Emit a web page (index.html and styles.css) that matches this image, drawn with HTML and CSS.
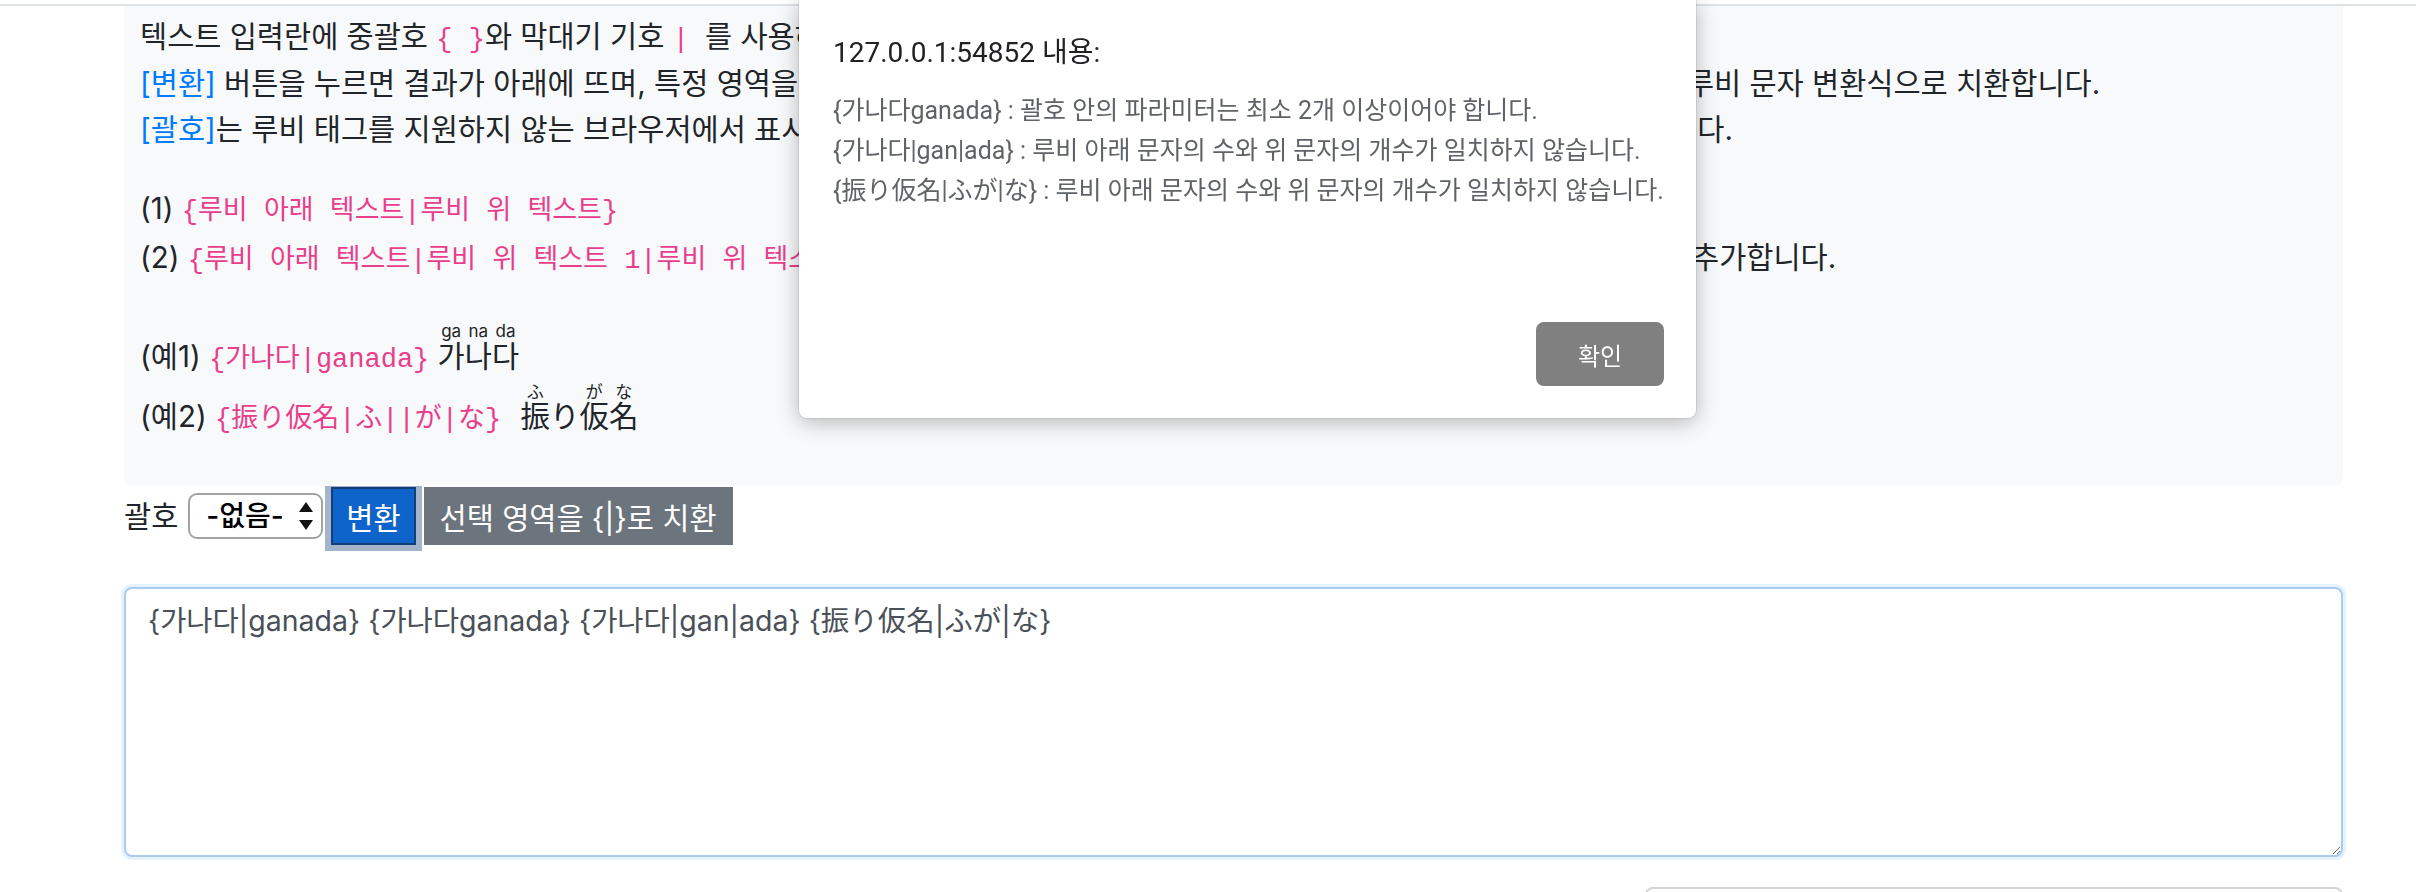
FILE: index.html
```html
<!DOCTYPE html>
<html lang="ko">
<head>
<meta charset="utf-8">
<title>루비 문자 변환기</title>
<link rel="stylesheet" href="styles.css">
</head>
<body>
<div class="topbar"></div>
<main class="page">
  <section class="help">
    <p class="desc">텍스트 입력란에 중괄호 <code>{ }</code>와 막대기 기호 <code> | </code>를 사용하여 루비 문자를 입력합니다.<br>
    <span class="kw">[변환]</span> 버튼을 누르면 결과가 아래에 뜨며, 특정 영역을 드래그해 선택한 후 <span class="kw">[선택 영역을 {|}로 치환]</span> 버튼을 누르면 해당 영역을 루비 문자 변환식으로 치환합니다.<br>
    <span class="kw">[괄호]</span>는 루비 태그를 지원하지 않는 브라우저에서 표시되는 괄호를 선택하는 옵션으로 선택하지 않으면 괄호 없이 그냥 표시됩니다.</p>
    <p class="syntax">(1) <code>{루비 아래 텍스트|루비 위 텍스트}</code><br>
    (2) <code>{루비 아래 텍스트|루비 위 텍스트 1|루비 위 텍스트 2}</code> : 루비 위 텍스트들을 글자마다 따로 달고 싶은 경우에는 막대기를 추가합니다.</p>
    <p class="examples">(예1) <code>{가나다|ganada}</code> <ruby>가<rt>ga</rt>나<rt>na</rt>다<rt>da</rt></ruby><br>
    (예2) <code>{振り仮名|ふ||が|な}</code> <ruby class="gap" lang="ja">振<rt>ふ</rt>り<rt></rt>仮<rt>が</rt>名<rt>な</rt></ruby></p>
  </section>
  <div class="controls">
    <label class="bracket-label" for="bracket">괄호</label>
    <span class="select-wrap">
      <select id="bracket" class="bracket-select">
        <option>-없음-</option>
        <option>( )</option>
        <option>[ ]</option>
      </select>
      <svg class="select-arrows" viewBox="0 0 16 28" width="16" height="28" aria-hidden="true">
        <path d="M8 0 L15 10 L1 10 Z" fill="#111"/>
        <path d="M1 18 L15 18 L8 28 Z" fill="#111"/>
      </svg>
    </span>
    <button class="btn btn-primary">변환</button>
    <button class="btn btn-secondary">선택 영역을 {|}로 치환</button>
  </div>
  <textarea class="source">{가나다|ganada} {가나다ganada} {가나다|gan|ada} {振り仮名|ふが|な}</textarea>
  <div class="result-row"><div class="result"></div></div>
</main>
<div class="alert-dialog" role="alertdialog">
  <div class="alert-title">127.0.0.1:54852 내용:</div>
  <div class="alert-msg">
    <p>{가나다ganada} : 괄호 안의 파라미터는 최소 2개 이상이어야 합니다.</p>
    <p>{가나다|gan|ada} : 루비 아래 문자의 수와 위 문자의 개수가 일치하지 않습니다.</p>
    <p>{振り仮名|ふが|な} : 루비 아래 문자의 수와 위 문자의 개수가 일치하지 않습니다.</p>
  </div>
  <div class="alert-actions"><button class="alert-ok">확인</button></div>
</div>
</body>
</html>
```

FILE: styles.css
```css
html, body {
  margin: 0;
  height: 892px;
  overflow: hidden;
  background: #fff;
}
body {
  font-family: Inter, "Noto Sans CJK KR", sans-serif;
  font-size: 29.5px;
  color: #212529;
}
.topbar {
  height: 4px;
  border-bottom: 2px solid #dee2e6;
}
.page {
  margin: 0 73px 0 124px;
}
.help {
  position: relative;
  z-index: 1;
  background: #f8f9fa;
  border-radius: 0 0 8px 8px;
  padding: 7px 16px 40px;
}
.help p {
  margin: 0;
  white-space: nowrap;
}
.desc {
  line-height: 46.5px;
}
.syntax {
  line-height: 49px;
  margin-top: 31px !important;
}
.examples {
  line-height: 60px;
  margin-top: 41px !important;
}
code {
  font-family: "Liberation Mono", "Noto Sans CJK KR", monospace;
  font-size: 27px;
  line-height: 1;
  color: #e83e8c;
}
.kw {
  color: #007bff;
}
ruby {
  line-height: 1.3;
}
rt {
  font-size: 17px;
  line-height: 1;
}
.gap {
  margin-left: 11px;
}
.controls {
  display: flex;
  align-items: center;
  gap: 8px;
  height: 58px;
  margin-top: 1px;
}
.bracket-label {
  margin-right: 2px;
  padding-bottom: 3px;
}
.select-wrap {
  position: relative;
  display: inline-block;
}
.bracket-select {
  appearance: none;
  -webkit-appearance: none;
  width: 135px;
  height: 46px;
  box-sizing: border-box;
  border: 2px solid #a3a3a3;
  border-radius: 9px;
  background: #fff;
  padding: 0 0 0 16px;
  font-family: Inter, "Noto Sans CJK KR", sans-serif;
  font-size: 28px;
  font-weight: 500;
  color: #000;
}
.select-arrows {
  position: absolute;
  right: 9px;
  top: 9px;
  pointer-events: none;
}
.btn {
  height: 58px;
  box-sizing: border-box;
  border: none;
  border-radius: 0;
  color: #fff;
  font-family: Inter, "Noto Sans CJK KR", sans-serif;
  font-size: 29.5px;
  padding: 0 16px;
}
.btn-primary {
  background: #0f64cb;
  border: 2px solid #123f7a;
  padding: 0 13px;
  box-shadow: 0 0 0 6px rgba(88, 118, 160, 0.55);
}
.btn-secondary {
  background: #6c757d;
}
.source {
  display: block;
  width: 100%;
  height: 270px;
  box-sizing: border-box;
  margin-top: 42px;
  border: 2px solid #a9cbef;
  border-radius: 8px;
  box-shadow: 0 0 0 3px rgba(0, 123, 255, 0.1);
  padding: 11px 22px 10px;
  font-family: Inter, "Noto Sans CJK KR", sans-serif;
  font-size: 28.5px;
  line-height: 1.5;
  color: #495057;
  outline: none;
}
.result-row {
  display: flex;
  justify-content: flex-end;
  margin-top: 30px;
}
.result {
  width: 698px;
  height: 60px;
  box-sizing: border-box;
  border: 2px solid #d3d3d3;
  border-radius: 8px;
}
.alert-dialog {
  position: fixed;
  top: 0;
  left: 799px;
  width: 897px;
  height: 418px;
  box-sizing: border-box;
  padding: 35px 32px 32px 34px;
  display: flex;
  flex-direction: column;
  background: #fff;
  border-radius: 0 0 8px 8px;
  box-shadow: 0 4px 22px rgba(0, 0, 0, 0.28), 0 0 0 1px rgba(0, 0, 0, 0.08);
  font-family: Roboto, "Noto Sans CJK KR", sans-serif;
  z-index: 10;
}
.alert-title {
  font-size: 28px;
  line-height: 36px;
  color: #202124;
}
.alert-msg {
  margin-top: 20px;
  font-size: 25px;
  line-height: 40px;
  color: #5f6368;
}
.alert-msg p {
  margin: 0;
}
.alert-actions {
  margin-top: auto;
  display: flex;
  justify-content: flex-end;
}
.alert-ok {
  width: 128px;
  height: 64px;
  border: none;
  border-radius: 8px;
  background: #808080;
  color: #fff;
  font-family: Roboto, "Noto Sans CJK KR", sans-serif;
  font-size: 24px;
}
```
